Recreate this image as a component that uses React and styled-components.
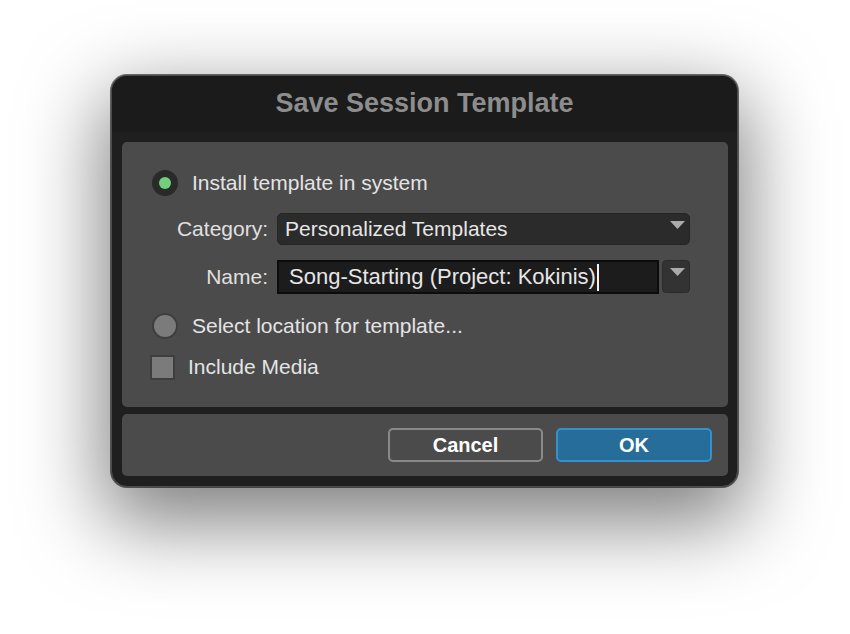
import React from "react";
import styled, { createGlobalStyle } from "styled-components";

const GlobalStyle = createGlobalStyle`
  html, body {
    margin: 0;
    padding: 0;
    background: #ffffff;
    font-family: "Liberation Sans", Arial, sans-serif;
  }
`;

const Page = styled.div`
  width: 850px;
  height: 634px;
  display: flex;
  align-items: flex-start;
  padding: 75px 0 0 111px;
  box-sizing: border-box;
  overflow: hidden;
`;

const Window = styled.div`
  width: 627px;
  height: 412px;
  box-sizing: border-box;
  background: #1f1f1f;
  border: 1px solid #4c4c4c;
  border-radius: 16px;
  box-shadow:
    0 0 0 1px rgba(0, 0, 0, 0.55),
    0 28px 80px 8px rgba(0, 0, 0, 0.5);
  display: flex;
  flex-direction: column;
  overflow: hidden;
`;

const TitleBar = styled.div`
  height: 56px;
  padding-bottom: 2px;
  box-sizing: border-box;
  background: #1b1b1b;
  display: flex;
  align-items: center;
  justify-content: center;
  color: #8d8d8d;
  font-size: 27px;
  font-weight: bold;
`;

const Body = styled.div`
  flex: 1;
  padding: 10px 9px 10px 10px;
  display: flex;
  flex-direction: column;
  gap: 7px;
`;

const Panel = styled.div`
  background: #4b4b4b;
  border-radius: 5px;
`;

const MainPanel = styled(Panel)`
  height: 265px;
  box-sizing: border-box;
  padding: 28px 39px 0 30px;
  display: flex;
  flex-direction: column;
`;

const Footer = styled(Panel)`
  flex: 1;
  display: flex;
  justify-content: flex-end;
  align-items: flex-start;
  padding: 14px 16px 0 0;
  gap: 13px;
`;

const OptionRow = styled.div`
  display: flex;
  align-items: center;
  gap: ${({ $gap }) => $gap}px;
  margin-top: ${({ $top }) => $top}px;
  color: #e4e4e4;
  font-size: 21px;
  height: 26px;
`;

const Radio = styled.span`
  width: 26px;
  height: 26px;
  border-radius: 50%;
  box-sizing: border-box;
  background: ${({ $checked }) => ($checked ? "#2a2a2a" : "#7b7b7b")};
  border: 2px solid ${({ $checked }) => ($checked ? "#2a2a2a" : "#3e3e3e")};
  display: flex;
  align-items: center;
  justify-content: center;

  &::after {
    content: "";
    display: ${({ $checked }) => ($checked ? "block" : "none")};
    width: 12px;
    height: 12px;
    border-radius: 50%;
    background: #6fcf7b;
  }
`;

const Checkbox = styled.span`
  width: 25px;
  height: 25px;
  margin-left: -2px;
  box-sizing: border-box;
  background: #7b7b7b;
  border: 2px solid #3e3e3e;
`;

const FieldGrid = styled.div`
  display: grid;
  grid-template-columns: 116px 1fr;
  column-gap: 9px;
  margin-top: 17px;
`;

const Label = styled.div`
  text-align: right;
  color: #e0e0e0;
  font-size: 21px;
  align-self: center;
  margin-top: ${({ $top }) => $top || 0}px;
`;

const Select = styled.div`
  position: relative;
  height: 32px;
  box-sizing: border-box;
  background: #2b2b2b;
  border: 1px solid #252525;
  border-radius: 5px;
  color: #e6e6e6;
  font-size: 21px;
  display: flex;
  align-items: center;
  padding-left: 7px;
`;

const Arrow = styled.svg`
  position: absolute;
  top: 7px;
  right: 4px;
`;

const NameRow = styled.div`
  display: flex;
  gap: 3px;
  margin-top: ${({ $top }) => $top}px;
`;

const Input = styled.div`
  width: 382px;
  height: 34px;
  box-sizing: border-box;
  background: #1c1c1c;
  border: 2px solid #0c0c0c;
  color: #e6e6e6;
  font-size: 22px;
  display: flex;
  align-items: center;
  padding-left: 10px;
`;

const Caret = styled.span`
  width: 2px;
  height: 27px;
  background: #f2f2f2;
  margin-left: 1px;
`;

const MenuButton = styled.div`
  position: relative;
  width: 28px;
  height: 33px;
  box-sizing: border-box;
  background: #333333;
  border: 1px solid #2a2a2a;
  border-radius: 4px;
`;

const Button = styled.div`
  width: ${({ $w }) => $w}px;
  height: 34px;
  box-sizing: border-box;
  border-radius: 5px;
  border: 2px solid ${({ $primary }) => ($primary ? "#3591cd" : "#8a8a8a")};
  background: ${({ $primary }) => ($primary ? "#266d99" : "transparent")};
  color: #ffffff;
  font-size: 20px;
  font-weight: bold;
  display: flex;
  align-items: center;
  justify-content: center;
`;

function Triangle() {
  return (
    <Arrow width="15" height="8" viewBox="0 0 15 8">
      <polygon points="0,0 15,0 7.5,8" fill="#ababab" />
    </Arrow>
  );
}

export default function App() {
  return (
    <Page>
      <GlobalStyle />
      <Window>
        <TitleBar>Save Session Template</TitleBar>
        <Body>
          <MainPanel>
            <OptionRow $gap={14} $top={0}>
              <Radio $checked />
              Install template in system
            </OptionRow>

            <FieldGrid>
              <Label>Category:</Label>
              <Select>
                Personalized Templates
                <Triangle />
              </Select>
              <Label $top={15}>Name:</Label>
              <NameRow $top={15}>
                <Input>
                  Song-Starting (Project: Kokinis)
                  <Caret />
                </Input>
                <MenuButton>
                  <Triangle />
                </MenuButton>
              </NameRow>
            </FieldGrid>

            <OptionRow $gap={14} $top={19}>
              <Radio />
              Select location for template...
            </OptionRow>

            <OptionRow $gap={13} $top={15}>
              <Checkbox />
              Include Media
            </OptionRow>
          </MainPanel>
          <Footer>
            <Button $w={155}>Cancel</Button>
            <Button $w={156} $primary>
              OK
            </Button>
          </Footer>
        </Body>
      </Window>
    </Page>
  );
}
